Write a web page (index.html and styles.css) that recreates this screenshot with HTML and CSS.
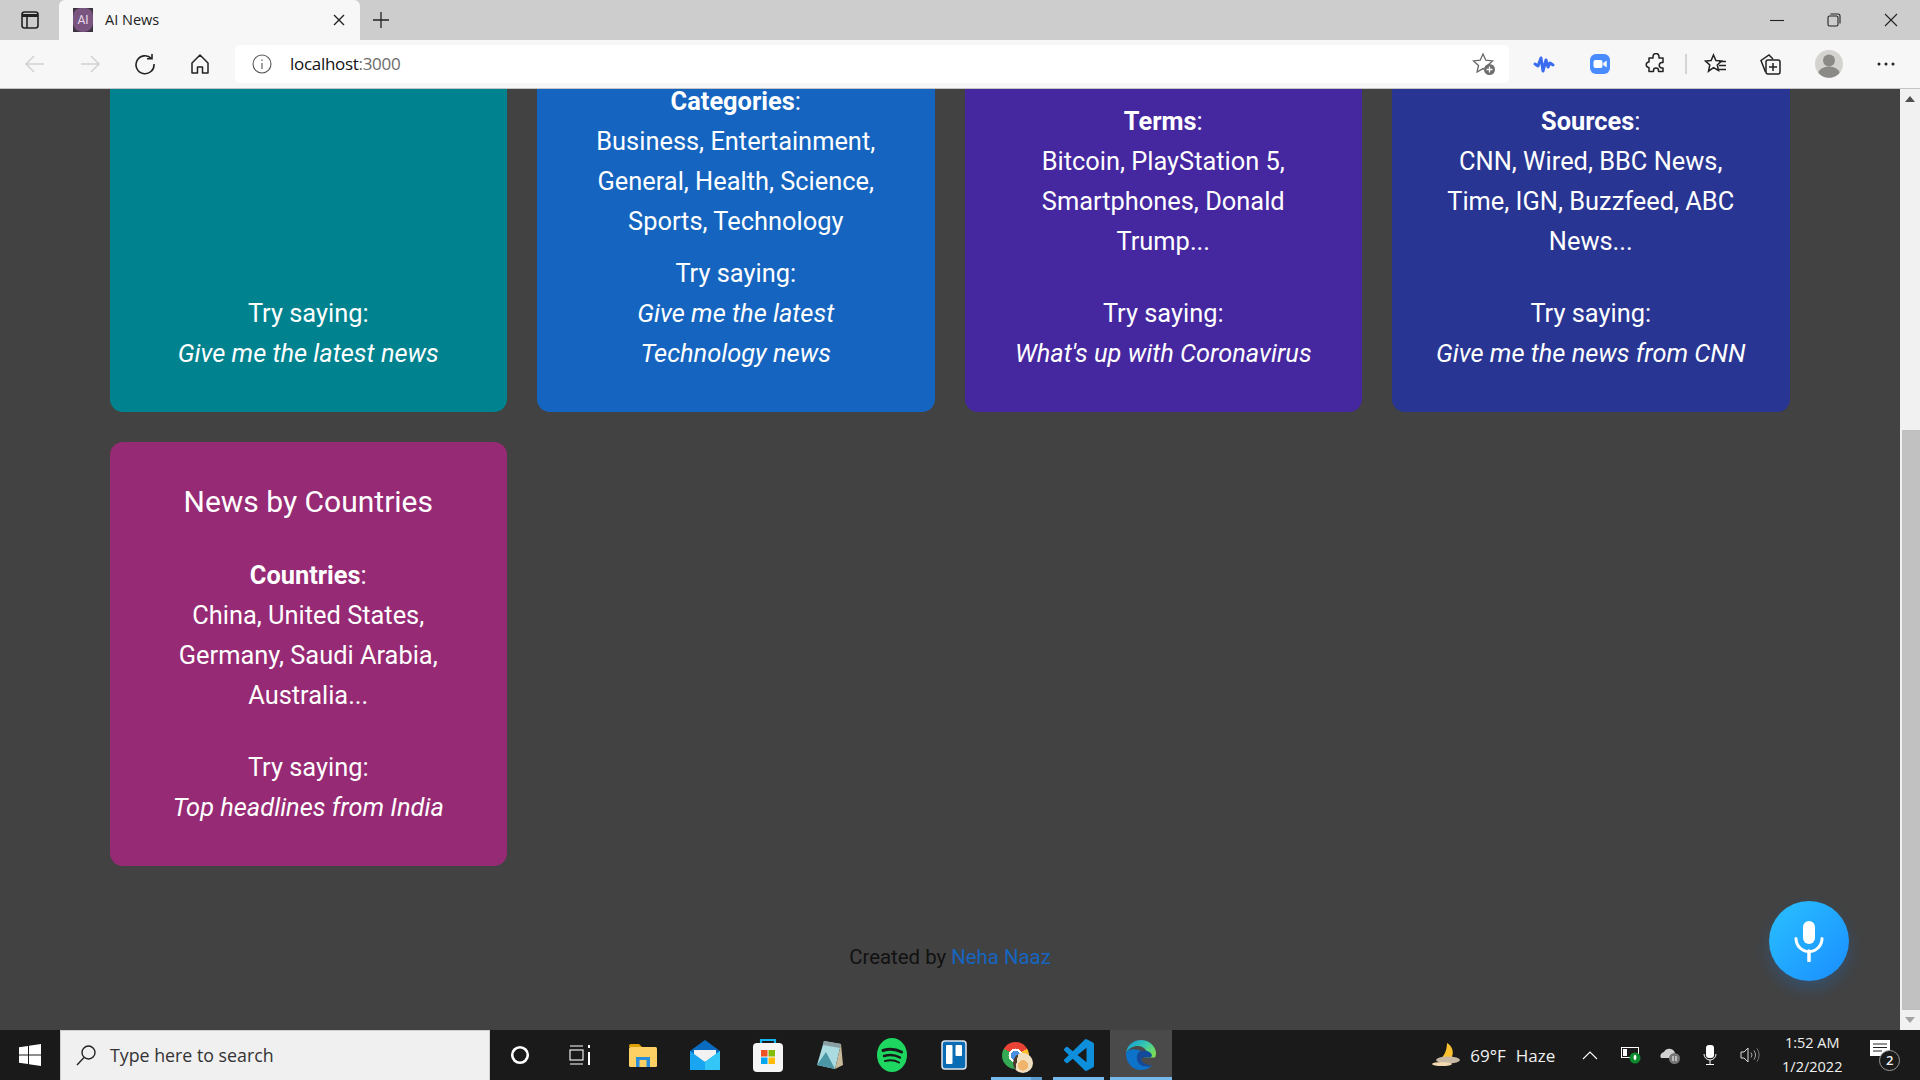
FILE: index.html
```html
<!DOCTYPE html>
<html lang="en">
<head>
    <meta charset="UTF-8">
    <title>AI News</title>
    <link rel="stylesheet" href="styles.css">
</head>
<body>
<div class="browser">
    <div class="tabstrip">
        <div class="tab-side">
            <svg width="20" height="20" viewBox="0 0 20 20" fill="none" stroke="#222" stroke-width="1.6"><rect x="2" y="2" width="16" height="16" rx="2.5"/><path d="M2 5.5h16" stroke-width="3"/><path d="M7 5v13"/></svg>
        </div>
        <div class="tab">
            <span class="favicon"><span class="favicon-ai">AI</span></span>
            <span class="tab-title">AI News</span>
            <svg class="tab-close" width="12" height="12" viewBox="0 0 12 12" stroke="#222" stroke-width="1.4"><path d="M1 1l10 10M11 1L1 11"/></svg>
        </div>
        <div class="tab-new">
            <svg width="18" height="18" viewBox="0 0 18 18" stroke="#222" stroke-width="1.3"><path d="M9 1v16M1 9h16"/></svg>
        </div>
        <div class="win-btns">
            <svg width="14" height="14" viewBox="0 0 14 14" stroke="#222" stroke-width="1.1"><path d="M0 7.5h14"/></svg>
            <svg width="14" height="14" viewBox="0 0 14 14" fill="none" stroke="#222" stroke-width="1.1"><rect x="1" y="3" width="10" height="10" rx="1.5"/><path d="M3.5 1h7.5A2 2 0 0 1 13 3v7.5"/></svg>
            <svg width="14" height="14" viewBox="0 0 14 14" stroke="#222" stroke-width="1.1"><path d="M1 1l12 12M13 1L1 13"/></svg>
        </div>
    </div>

    <div class="toolbar">
        <div class="nav-btns">
            <svg width="22" height="22" viewBox="0 0 22 22" fill="none" stroke="#d2d2d2" stroke-width="1.5"><path d="M20 11H2M10 3l-8 8 8 8"/></svg>
            <svg width="22" height="22" viewBox="0 0 22 22" fill="none" stroke="#d2d2d2" stroke-width="1.5"><path d="M2 11h18M12 3l8 8-8 8"/></svg>
            <svg width="22" height="22" viewBox="0 0 22 22" fill="none" stroke="#222" stroke-width="1.6"><path d="M17.5 5.5A9 9 0 1 0 20 11"/><path d="M13 5.8h5V1"/></svg>
            <svg width="22" height="22" viewBox="0 0 22 22" fill="none" stroke="#222" stroke-width="1.5" stroke-linejoin="round"><path d="M3 10l8-8 8 8v10h-5.5v-6h-5v6H3z"/></svg>
        </div>
        <div class="address">
            <svg width="20" height="20" viewBox="0 0 20 20" fill="none" stroke="#555" stroke-width="1.1"><circle cx="10" cy="10" r="9"/><path d="M10 9v6M10 5.5V7"/></svg>
            <span class="url">localhost<span class="url-port">:3000</span></span>
            <svg class="addr-star" width="24" height="24" viewBox="0 0 24 24"><path d="M11 2l2.8 6.2 6.700.7-5 4.500 1.400 6.600L11 16.600 5.100 20l1.400-6.600-5-4.500 6.700-.7z" fill="none" stroke="#666" stroke-width="1.3"/><circle cx="17.5" cy="17.5" r="5.5" fill="#6e6e6e"/><path d="M17.5 14.500v6M14.500 17.500h6" stroke="#fff" stroke-width="1.3"/></svg>
        </div>
        <div class="ext-btns">
            <svg class="ext-wave" width="22" height="20" viewBox="0 0 22 20" fill="none" stroke="#3b6cf0" stroke-width="3" stroke-linecap="round" stroke-linejoin="round"><path d="M2 10l3 2 3-8 2 13 3-11 2 7 2-4 3 2"/></svg>
            <svg class="ext-zoom" width="20" height="20" viewBox="0 0 20 20"><rect width="20" height="20" rx="6" fill="#4a8cff"/><rect x="3.5" y="6" width="9" height="8" rx="2" fill="#fff"/><path d="M13.3 9l3.400-2.500v7L13.300 11z" fill="#fff"/></svg>
            <svg class="ext-puzzle" width="22" height="22" viewBox="0 0 22 22" fill="none" stroke="#222" stroke-width="1.5" stroke-linejoin="round"><path d="M8 3.500a3 3 0 0 1 6 0V5h4v4.500h-1.500a2.800 2.800 0 0 0 0 5.500H18v3.500h-4.500v-1a2.500 2.500 0 0 0-5 0v1H4v-4h-.5a2.800 2.800 0 0 1 0-5.500H4V5h4z"/></svg>
            <span class="ext-divider"></span>
            <svg class="ext-fav" width="24" height="22" viewBox="0 0 24 22" fill="none" stroke="#222" stroke-width="1.5"><path d="M9.500 2l2.400 5.500 5.600.6-4.200 3.800 1.200 5.600-5-2.800-5 3.500 1.300-6.300L1.600 8.100l5.500-.6z"/><path d="M15 8.500h7M15 12.500h7M15 16.500h7" stroke-width="1.3"/></svg>
            <svg class="ext-coll" width="22" height="22" viewBox="0 0 22 22" fill="none" stroke="#222" stroke-width="1.5"><path d="M6.500 19L2 7.500 10 2l4 4"/><rect x="7" y="7" width="14" height="14" rx="2" fill="#f7f7f7"/><path d="M14 10v8M10 14h8"/></svg>
            <svg class="ext-avatar" width="28" height="28" viewBox="0 0 28 28"><circle cx="14" cy="14" r="14" fill="#d5d3d0"/><circle cx="14" cy="10.5" r="6" fill="#8c8a87"/><path d="M3.500 23a10.500 6.500 0 0 1 21 0A14 14 0 0 1 3.500 23z" fill="#8c8a87"/></svg>
            <svg class="ext-more" width="18" height="4" viewBox="0 0 18 4" fill="#222"><circle cx="2" cy="2" r="1.5"/><circle cx="9" cy="2" r="1.5"/><circle cx="16" cy="2" r="1.5"/></svg>
        </div>
    </div>

    <div class="viewport">
        <main class="page">
            <div class="cards">
                <section class="card teal">
                    <div class="card-title"></div>
                    <div class="card-info"></div>
                    <div class="card-try">
                        <p>Try saying:</p>
                        <p class="say">Give me the latest news</p>
                    </div>
                </section>
                <section class="card blue">
                    <div class="card-title"></div>
                    <div class="card-info">
                        <p><b>Categories</b>:</p>
                        <p>Business, Entertainment, General, Health, Science, Sports, Technology</p>
                    </div>
                    <div class="card-try">
                        <p>Try saying:</p>
                        <p class="say">Give me the latest Technology news</p>
                    </div>
                </section>
                <section class="card violet">
                    <div class="card-title"></div>
                    <div class="card-info">
                        <p><b>Terms</b>:</p>
                        <p>Bitcoin, PlayStation 5, Smartphones, Donald Trump...</p>
                    </div>
                    <div class="card-try">
                        <p>Try saying:</p>
                        <p class="say">What's up with Coronavirus</p>
                    </div>
                </section>
                <section class="card indigo">
                    <div class="card-title"></div>
                    <div class="card-info">
                        <p><b>Sources</b>:</p>
                        <p>CNN, Wired, BBC News, Time, IGN, Buzzfeed, ABC News...</p>
                    </div>
                    <div class="card-try">
                        <p>Try saying:</p>
                        <p class="say">Give me the news from CNN</p>
                    </div>
                </section>
                <section class="card plum">
                    <h2 class="card-title">News by Countries</h2>
                    <div class="card-info">
                        <p><b>Countries</b>:</p>
                        <p>China, United States, Germany, Saudi Arabia, Australia...</p>
                    </div>
                    <div class="card-try">
                        <p>Try saying:</p>
                        <p class="say">Top headlines from India</p>
                    </div>
                </section>
            </div>
            <footer class="credit">Created by <a href="#">Neha Naaz</a></footer>
            <button class="mic" aria-label="Talk">
                <svg width="30" height="42" viewBox="0 0 30 42" fill="none" stroke="#fff" stroke-linecap="round"><rect x="9" y="1" width="12" height="23" rx="6" fill="#fff" stroke="none"/><path d="M2 18.500a13 13 0 0 0 26 0" stroke-width="3"/><path d="M15 31v10" stroke-width="3.500"/></svg>
            </button>
        </main>
        <div class="scrollbar">
            <span class="arrow-up"></span>
            <span class="thumb"></span>
            <span class="arrow-down"></span>
        </div>
    </div>

    <div class="taskbar">
        <div class="start">
            <svg width="22" height="22" viewBox="0 0 22 22" fill="#fff"><path d="M0 3.200l9-1.300v8.600H0zM10 1.700L22 0v10.500H10zM0 11.500h9v8.600l-9-1.300zM10 11.500h12V22l-12-1.700z"/></svg>
        </div>
        <div class="search">
            <svg width="22" height="22" viewBox="0 0 22 22" fill="none" stroke="#222" stroke-width="1.4"><circle cx="13.5" cy="8.5" r="6.5"/><path d="M9 13.500L2 21"/></svg>
            <span>Type here to search</span>
        </div>
        <div class="task-icons">
            <span class="sys-slot">
                <svg width="20" height="20" viewBox="0 0 20 20" fill="none" stroke="#fff" stroke-width="2.6"><circle cx="10" cy="10" r="7.8"/></svg>
            </span>
            <span class="sys-slot">
                <svg width="22" height="22" viewBox="0 0 22 22" fill="none" stroke="#fff" stroke-width="1.1"><path d="M1 2h13M1 20h13"/><rect x="1" y="6" width="13" height="10"/><path d="M20 1v3M20 8v13" stroke-width="2"/></svg>
            </span>
            <span class="task-slot">
                <svg width="28" height="26" viewBox="0 0 28 26"><path d="M0 4a2 2 0 0 1 2-2h8l3 3h-13z" fill="#e0a100"/><rect y="5" width="28" height="20" rx="1.5" fill="#ffd064"/><rect x="7" y="15" width="14" height="10" fill="#2a8fd8"/><rect x="10.5" y="18" width="7" height="7" fill="#ffd064"/></svg>
            </span>
            <span class="task-slot">
                <svg width="30" height="30" viewBox="0 0 30 30"><path d="M0 11L15 0l15 11v4H0z" fill="#0a6cc0"/><path d="M4 10h22v8L15 22 4 18z" fill="#f2f2f2"/><path d="M0 11l15 11 15-11v19H0z" fill="#1aa5f0"/><path d="M15 22L30 11v19H15z" fill="#35c6f8"/></svg>
            </span>
            <span class="task-slot">
                <svg width="30" height="34" viewBox="0 0 30 34"><path d="M8 7V2h14v5" fill="none" stroke="#14b5f0" stroke-width="2.2"/><rect y="5" width="30" height="29" rx="4" fill="#f5f5f5"/><rect x="8" y="12" width="6.500" height="6.500" fill="#f05323"/><rect x="15.5" y="12" width="6.500" height="6.500" fill="#82bc06"/><rect x="8" y="19.5" width="6.500" height="6.500" fill="#05a6f0"/><rect x="15.5" y="19.5" width="6.500" height="6.500" fill="#ffba08"/></svg>
            </span>
            <span class="task-slot">
                <svg width="28" height="30" viewBox="0 0 28 30"><path d="M8 1l17 3-6 25L1 25z" fill="#a9dbe0"/><path d="M8 1l17 3-1 4L7 5z" fill="#8b9ea3"/><path d="M25 4l2 21-8 4z" fill="#c8b99a"/><path d="M1 25L10 12l9 17z" fill="#4b97a6"/></svg>
            </span>
            <span class="task-slot">
                <svg width="30" height="34" viewBox="0 0 30 34" fill="none" stroke="#191919" stroke-linecap="round"><ellipse cx="15" cy="17" rx="15" ry="17" fill="#1ed760" stroke="none"/><path d="M6 12.500c6-2 13-1.500 18.500 1.500" stroke-width="3"/><path d="M7 18c5-1.500 11.500-1 16 1.500" stroke-width="2.5"/><path d="M8 23c4.500-1 10-.8 14 1.500" stroke-width="2"/></svg>
            </span>
            <span class="task-slot">
                <svg width="26" height="30" viewBox="0 0 26 30"><rect x="1" y="1" width="24" height="28" rx="3" fill="#0a6cb4" stroke="#dfe7ee" stroke-width="1.5"/><rect x="5" y="5" width="6.500" height="19" rx="1" fill="#fff"/><rect x="14.5" y="5" width="6.500" height="11" rx="1" fill="#fff"/></svg>
            </span>
            <span class="task-slot is-open">
                <span class="chrome-icon"></span>
                <span class="chrome-badge"></span>
                <span class="run-stack"></span>
            </span>
            <span class="task-slot is-open">
                <svg width="30" height="32" viewBox="0 0 24 24" preserveAspectRatio="none"><path fill="#0e8fdc" d="M23.150 2.587L18.210.21a1.494 1.494 0 0 0-1.705.29l-9.460 8.630-4.120-3.128a.999.999 0 0 0-1.276.057L.327 7.261A1 1 0 0 0 .326 8.740L3.899 12 .326 15.260a1 1 0 0 0 .001 1.479L1.650 17.940a.999.999 0 0 0 1.276.057l4.120-3.128 9.460 8.630a1.492 1.492 0 0 0 1.704.29l4.942-2.377A1.500 1.500 0 0 0 24 20.060V3.939a1.500 1.500 0 0 0-.850-1.352zm-5.146 14.861L10.826 12l7.178-5.448v10.896z"/></svg>
            </span>
            <span class="task-slot is-open is-active">
                <svg width="30" height="30" viewBox="0 0 30 30"><defs><linearGradient id="edge-top" x1="0" y1="0" x2="1" y2=".7"><stop offset="0" stop-color="#0f8fdc"/><stop offset=".55" stop-color="#37c9b0"/><stop offset="1" stop-color="#7adf55"/></linearGradient></defs><path d="M15 0C7 0 1 5.500 0 13c3-6 10-8 15-6.500 4 1.200 6 4 6 7.500 0 1.500-1 3-3 3.500h11c.7-1.500 1-3 1-4C30 6 23 0 15 0z" fill="url(#edge-top)"/><path d="M0 13c-.5 9 6 17 15 17 4.500 0 8-1.500 11-4.500-5 2-12 1-14.500-4.500-1.500-3.500-.5-8 3.500-10C10 9 2 8 0 13z" fill="#0d72c9"/><path d="M15 11c-3.500 1.500-5 5.500-3.500 10 2 5.500 9.500 6.500 14.500 4.500-4-1-9-1-10.500-5.500-.5-1.500 0-2.500 1-2.500h7c2 0 3-2 2-3.500-2-3-6.500-4.500-10.500-3z" fill="#134a9c"/></svg>
            </span>
        </div>
        <div class="tray">
            <svg class="tray-moon" width="30" height="26" viewBox="0 0 30 26"><path d="M15 1a11 11 0 0 1 2 18H5c5-2 10-8 10-18z" fill="#fbc02d"/><ellipse cx="16" cy="18" rx="12" ry="3.5" fill="#c6b8a2"/><ellipse cx="10" cy="22" rx="10" ry="2" fill="#f2d9b0"/></svg>
            <span class="tray-temp">69°F</span>
            <span class="tray-haze">Haze</span>
            <svg class="tray-caret" width="16" height="10" viewBox="0 0 16 10" fill="none" stroke="#fff" stroke-width="1.1"><path d="M1 9l7-7 7 7"/></svg>
            <svg class="tray-batt" width="20" height="18" viewBox="0 0 20 18"><rect x=".5" y="1.5" width="17" height="10" fill="none" stroke="#fff"/><rect x="2" y="3" width="4" height="7" fill="#fff"/><circle cx="14" cy="12" r="5.5" fill="#0c8a2e"/><path d="M14 8.500c2 1.500 2 4 0 6-2-2-2-4.500 0-6z" fill="#fff"/></svg>
            <svg class="tray-cloud" width="20" height="18" viewBox="0 0 20 18"><path d="M1 12a4 4 0 0 1 3-6 6 6 0 0 1 11 1v5z" fill="#d0d0d0"/><circle cx="14.5" cy="12.5" r="5.5" fill="#777"/><path d="M13 10v5M16 10v5" stroke="#fff"/></svg>
            <svg class="tray-mic" width="14" height="20" viewBox="0 0 14 20"><rect x="3" y="0" width="8" height="13" rx="3" fill="#fff"/><path d="M1 9a6 6 0 0 0 12 0M7 15v4M3 19.500h8" fill="none" stroke="#fff"/></svg>
            <svg class="tray-sound" width="20" height="18" viewBox="0 0 20 18" fill="none" stroke="#ddd"><path d="M1 6h3l4-4v14l-4-4H1z"/><path d="M11 6.500a4 4 0 0 1 0 5M14 4.500a8 8 0 0 1 0 9" stroke="#aaa"/><path d="M17 2.500a11 11 0 0 1 0 13" stroke="#777"/></svg>
            <div class="tray-clock">
                <span>1:52 AM</span>
                <span>1/2/2022</span>
            </div>
            <div class="tray-notify">
                <svg width="20" height="18" viewBox="0 0 20 18"><path d="M0 0h20v16H0z" fill="#fff"/><path d="M3 4h14M3 7.500h14M3 11h9" stroke="#222"/></svg>
                <span class="notify-badge">2</span>
            </div>
        </div>
    </div>
</div>
</body>
</html>
```

FILE: styles.css
```css
* {
    padding: 0;
    margin: 0;
    box-sizing: border-box;
}

body {
    font-family: Roboto, "Liberation Sans", sans-serif;
    overflow: hidden;
}

.browser {
    display: flex;
    flex-direction: column;
    height: 1080px;
}

/* browser chrome */
.tabstrip {
    display: flex;
    align-items: flex-end;
    height: 40px;
    background-color: #cdcdcd;
    flex-shrink: 0;
}

.tab-side {
    display: flex;
    align-items: center;
    justify-content: center;
    width: 59px;
    height: 40px;
}

.tab {
    display: flex;
    align-items: center;
    width: 301px;
    height: 40px;
    padding: 0 15px 0 14px;
    background-color: #f7f7f7;
    border-radius: 6px 6px 0 0;
}

.favicon {
    display: flex;
    width: 20px;
    height: 24px;
    background-color: #3b3340;
}

.favicon-ai {
    flex: 1;
    font-size: 12px;
    line-height: 24px;
    text-align: center;
    color: #e8dce8;
    background-color: #7a5580;
    border-radius: 8px 8px 9px 9px;
}

.tab-title {
    flex: 1;
    margin: 0 0 2px 12px;
    font-family: "Open Sans", sans-serif;
    font-size: 14.5px;
    color: #222;
}

.tab-new {
    display: flex;
    align-items: center;
    justify-content: center;
    width: 42px;
    height: 40px;
}

.win-btns {
    display: flex;
    align-items: center;
    gap: 43px;
    height: 40px;
    margin-left: auto;
    padding-right: 22px;
}

.toolbar {
    display: flex;
    align-items: center;
    height: 49px;
    background-color: #f7f7f7;
    border-bottom: 1px solid #c4c4c4;
    flex-shrink: 0;
}

.nav-btns {
    display: flex;
    align-items: center;
    gap: 33px;
    width: 235px;
    padding-left: 24px;
}

.address {
    display: flex;
    align-items: center;
    width: 1274px;
    height: 38px;
    padding: 0 13px 0 17px;
    background-color: #fff;
    border-radius: 5px;
}

.url {
    flex: 1;
    margin: 0 0 2px 18px;
    font-family: "Open Sans", sans-serif;
    font-size: 17px;
    letter-spacing: -0.3px;
    color: #111;
}

.url-port {
    color: #6b6b6b;
}

.ext-btns {
    display: flex;
    align-items: center;
    padding-left: 24px;
}

.ext-zoom {
    margin-left: 35px;
}

.ext-puzzle {
    margin-left: 35px;
}

.ext-divider {
    width: 2px;
    height: 20px;
    margin-left: 18px;
    background-color: #d4d4d4;
}

.ext-fav {
    margin-left: 17px;
}

.ext-coll {
    margin-left: 31px;
}

.ext-avatar {
    margin-left: 34px;
}

.ext-more {
    margin-left: 34px;
}

/* the page itself, scrolled down */
.viewport {
    display: flex;
    flex: 1;
    min-height: 0;
}

.page {
    position: relative;
    flex: 1;
    overflow: hidden;
    background-color: #424242;
}

.cards {
    display: grid;
    grid-template-columns: repeat(4, 1fr);
    gap: 30px;
    margin: -101px 110.5px 0 109.5px;
}

.card {
    display: flex;
    flex-direction: column;
    justify-content: space-between;
    height: 424px;
    padding: 40px 40px 39px;
    text-align: center;
    color: #fff;
    font-size: 25.4px;
    line-height: 40px;
    border-radius: 13px;
}

.card-title {
    min-height: 40px;
    margin-bottom: 1px;
    font-size: 30px;
    font-weight: 400;
}

.card-info b {
    font-weight: 700;
}

.say {
    font-style: italic;
}

.teal {
    background-color: #00838f;
}

.blue {
    background-color: #1565c0;
}

.violet {
    background-color: #4527a0;
}

.indigo {
    background-color: #283593;
}

.plum {
    background-color: #962a74;
}

.credit {
    margin-top: 76px;
    text-align: center;
    font-size: 20.4px;
    line-height: 30px;
    color: #111;
}

.credit a {
    color: #1565c0;
    text-decoration: none;
}

.mic {
    position: absolute;
    left: 1769px;
    top: 812px;
    display: flex;
    align-items: center;
    justify-content: center;
    width: 80px;
    height: 80px;
    border: 0;
    border-radius: 50%;
    background: linear-gradient(135deg, #29c1ff, #1a8dff);
    box-shadow: 0 8px 16px rgba(25, 120, 220, 0.28);
}

.scrollbar {
    display: flex;
    flex-direction: column;
    align-items: center;
    width: 20px;
    background-color: #f1f1f1;
}

.arrow-up {
    width: 0;
    height: 0;
    margin-top: 7px;
    border: 5px solid transparent;
    border-top: 0;
    border-bottom: 6px solid #505050;
}

.thumb {
    width: 18px;
    height: 580px;
    margin: 328px 0 auto 1px;
    background-color: #c1c1c1;
}

.arrow-down {
    width: 0;
    height: 0;
    margin-bottom: 7px;
    border: 5px solid transparent;
    border-bottom: 0;
    border-top: 6px solid #a3a3a3;
}

/* windows taskbar */
.taskbar {
    display: flex;
    align-items: center;
    height: 50px;
    background-color: #1a1a1a;
    color: #fff;
    flex-shrink: 0;
}

.start {
    display: flex;
    align-items: center;
    justify-content: center;
    width: 60px;
}

.search {
    display: flex;
    align-items: center;
    gap: 13px;
    width: 430px;
    height: 50px;
    padding: 0 0 2px 14px;
    background-color: #f0f0f0;
    border: 1px solid #cfcfcf;
    border-bottom: 0;
    font-family: "Open Sans", sans-serif;
    font-size: 17.8px;
    color: #333;
}

.task-icons {
    display: flex;
    height: 50px;
}

.sys-slot {
    display: flex;
    align-items: center;
    justify-content: center;
    width: 60px;
    height: 50px;
}

.sys-slot + .sys-slot {
    margin-right: 2px;
}

.task-slot {
    position: relative;
    display: flex;
    align-items: center;
    justify-content: center;
    width: 62.25px;
    height: 50px;
}

.is-open::after {
    content: "";
    position: absolute;
    left: 5.5px;
    right: 5.75px;
    bottom: 0;
    height: 3px;
    background-color: #76b9ed;
}

.is-active {
    background-color: #4a4a4a;
}

.is-active::after {
    left: 0;
    right: 0;
}

.chrome-icon {
    width: 27px;
    height: 27px;
    margin-right: 2px;
    border-radius: 50%;
    background:
        radial-gradient(circle, #4a90e2 0 24%, #fff 25% 36%, transparent 37%),
        conic-gradient(#ea4335 0 60deg, #fbc02d 60deg 180deg, #34a853 180deg 300deg, #ea4335 300deg);
}

.chrome-badge {
    position: absolute;
    left: 27.5px;
    top: 23px;
    width: 20px;
    height: 20px;
    border-radius: 50%;
    background:
        radial-gradient(circle at 50% 62%, #f0b56a 0 32%, transparent 33%),
        linear-gradient(100deg, #4a3a2c 0 22%, #f2dfc0 23%);
}

.run-stack {
    position: absolute;
    right: 5.75px;
    bottom: 0;
    width: 11px;
    height: 3px;
    background-color: #5a9bd0;
    z-index: 1;
}

.tray {
    display: flex;
    align-items: center;
    flex: 1;
    font-family: "Open Sans", sans-serif;
    font-size: 17px;
    color: #f0f0f0;
}

.tray-moon {
    margin-left: 260px;
}

.tray-temp {
    margin-left: 8px;
}

.tray-haze {
    margin-left: 10px;
}

.tray-caret {
    margin-left: 27px;
}

.tray-batt {
    margin-left: 23px;
}

.tray-cloud {
    margin-left: 19px;
}

.tray-mic {
    margin-left: 23px;
}

.tray-sound {
    margin-left: 23px;
}

.tray-clock {
    display: flex;
    flex-direction: column;
    align-items: center;
    width: 76px;
    margin-left: 14px;
    font-size: 14.5px;
    line-height: 24px;
}

.tray-notify {
    position: relative;
    margin-top: -8px;
    margin-left: 20px;
}

.notify-badge {
    position: absolute;
    left: 9px;
    top: 10px;
    width: 21px;
    height: 21px;
    font-size: 13px;
    font-weight: 600;
    line-height: 19px;
    text-align: center;
    background-color: #1a1a1a;
    border: 1px solid #999;
    border-radius: 50%;
}
```
